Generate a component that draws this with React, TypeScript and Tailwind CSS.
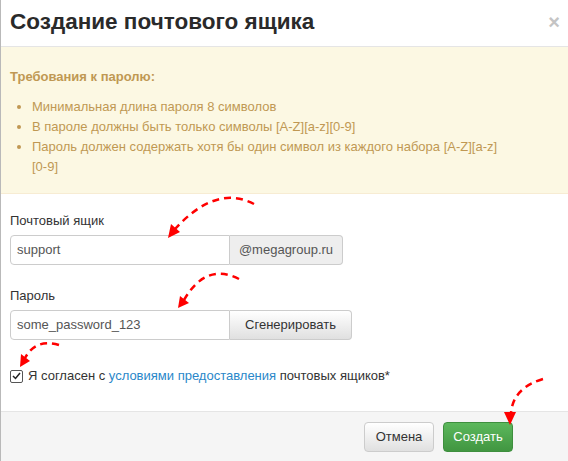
import React from "react";

function Arrows() {
  return (
    <svg
      className="absolute left-0 top-0 pointer-events-none"
      width={568}
      height={461}
      viewBox="0 0 568 461"
    >
      <g fill="none" stroke="#ff0000" strokeWidth={2.5} strokeDasharray="7 5" strokeLinecap="butt">
        <path d="M253 204 Q 215 184 174 229" />
        <path d="M238 279 Q 205 262 183 300" />
        <path d="M58 345 Q 35 338 24 358" />
        <path d="M542 379 Q 512 388 510 413" />
      </g>
      <g fill="#ff0000">
        <polygon points="167,238 179,232 170,224" />
        <polygon points="177,308 188,303 179,296" />
        <polygon points="19,367 29,361 20,354" />
        <polygon points="509,425 503,412 515,412" />
      </g>
    </svg>
  );
}

export default function App() {
  return (
    <div className="relative w-[568px] h-[461px] overflow-hidden bg-white border-l border-[#b9b9b9] font-['Liberation_Sans',Arial,sans-serif] text-[13px] text-[#333]">
      {/* Header */}
      <div className="h-[47px] border-b border-[#e5e5e5] flex items-center justify-between pl-[9px] pr-[8px]">
        <h1 className="text-[22.5px] font-bold leading-none text-[#2a2a2a] pb-[1px]">
          Создание почтового ящика
        </h1>
        <span className="text-[20px] font-bold leading-none text-[#c4c4c4] mb-[3px]">×</span>
      </div>

      {/* Warning */}
      <div className="h-[147px] bg-[#fcf8e3] border-b border-[#f7ecd3] pl-[9px] pr-[60px] pt-[20px] text-[#c09853]">
        <div className="font-bold leading-[20px]">Требования к паролю:</div>
        <ul className="mt-[10px] pl-[22px] list-disc leading-[20px] marker:text-[#c09853]">
          <li>Минимальная длина пароля 8 символов</li>
          <li>
            В пароле должны быть только символы <span className="whitespace-nowrap">[A-Z][a-z][0-9]</span>
          </li>
          <li>
            Пароль должен содержать хотя бы один символ из каждого набора{" "}
            <span className="whitespace-nowrap">[A-Z][a-z]</span> <span className="whitespace-nowrap">[0-9]</span>
          </li>
        </ul>
      </div>

      {/* Body */}
      <div className="h-[217px] pl-[9px] pt-[17px]">
        <div className="leading-[20px]">Почтовый ящик</div>
        <div className="mt-[4px] flex h-[30px] w-[333px]">
          <div className="w-[220px] h-full border border-[#ccc] rounded-l-[4px] flex items-center pl-[6px] text-[#555]">
            support
          </div>
          <div className="flex-1 h-full border border-l-0 border-[#ccc] rounded-r-[4px] bg-[#eee] flex items-center justify-center text-[#555]">
            @megagroup.ru
          </div>
        </div>

        <div className="mt-[21px] leading-[20px]">Пароль</div>
        <div className="mt-[4px] flex h-[30px] w-[342px]">
          <div className="w-[220px] h-full border border-[#ccc] rounded-l-[4px] flex items-center pl-[6px] text-[#555]">
            some_password_123
          </div>
          <div className="flex-1 h-full border border-l-0 border-[#ccc] rounded-r-[4px] bg-linear-to-b from-white to-[#e0e0e0] flex items-center justify-center text-[#333]">
            Сгенерировать
          </div>
        </div>

        <div className="mt-[26px] flex items-center h-[20px]">
          <span className="w-[13px] h-[13px] border border-[#555] rounded-[2px] bg-white flex items-center justify-center">
            <svg width="9" height="8" viewBox="0 0 9 8">
              <path d="M1 4 L3.5 6.5 L8 1" fill="none" stroke="#222" strokeWidth="1.5" />
            </svg>
          </span>
          <span className="ml-[5px]">
            Я согласен с{" "}
            <span className="text-[#2a87c9]">условиями предоставления</span>{" "}
            почтовых ящиков*
          </span>
        </div>
      </div>

      {/* Footer */}
      <div className="h-[50px] border-t border-[#e5e5e5] bg-[#f5f5f5] flex items-center justify-end gap-[9px] pr-[55px]">
        <button className="w-[70px] h-[30px] border border-[#ccc] rounded-[4px] bg-linear-to-b from-white to-[#e0e0e0] text-[#333] text-[13px]">
          Отмена
        </button>
        <button className="w-[70px] h-[30px] border border-[#3e8f3e] rounded-[4px] bg-linear-to-b from-[#5cb85c] to-[#419641] text-white text-[13px]">
          Создать
        </button>
      </div>

      <Arrows />
    </div>
  );
}
